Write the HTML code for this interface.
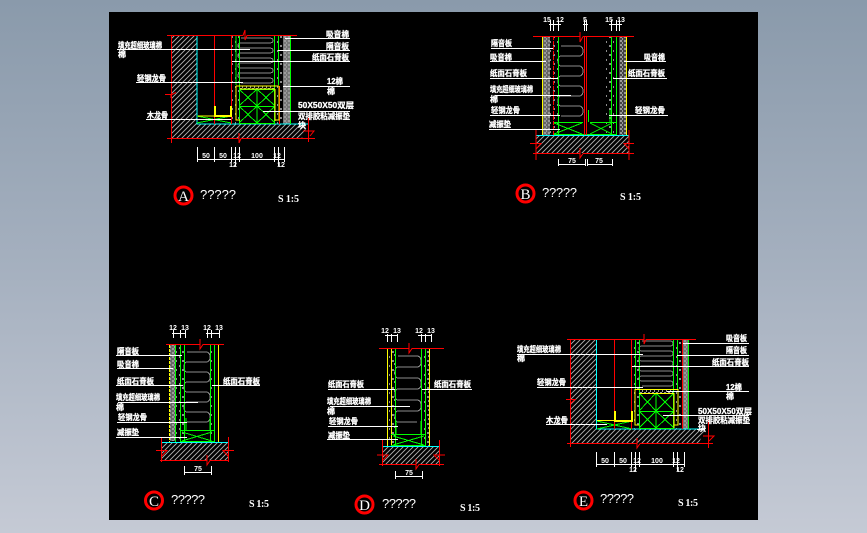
<!DOCTYPE html>
<html><head><meta charset="utf-8"><style>
html,body{margin:0;padding:0;width:867px;height:533px;overflow:hidden;background:linear-gradient(180deg,#8a9aab 0,#a5b0bf 50%,#c5cad5 100%)}
svg{position:absolute;left:0;top:0}
.k{fill:none;shape-rendering:crispEdges;stroke-width:1}
.r{stroke:#f00}.g{stroke:#0f0}.c{stroke:#0ff}.y{stroke:#ff0}.w{stroke:#fff}
.v{fill:none;stroke:#8c8c8c;stroke-width:1;shape-rendering:crispEdges}
.t{font:bold 8px "Liberation Sans","Noto Sans CJK SC",sans-serif;fill:#fff;stroke:#fff;stroke-width:.3}
.n{font:bold 7px "Liberation Sans",sans-serif;fill:#fff;text-anchor:middle}
.q{font:13px "Liberation Sans",sans-serif;fill:#fff}
.s{font:bold 10px "Liberation Serif",serif;fill:#fff}
.l{font:15px "Liberation Serif",serif;fill:#fff;text-anchor:middle}
.o{fill:#000;stroke:#f00;stroke-width:3}
</style></head><body>
<svg width="867" height="533" viewBox="0 0 867 533" xmlns="http://www.w3.org/2000/svg">
<defs>
<pattern id="h" width="5" height="5" patternUnits="userSpaceOnUse"><path d="M0 5L5 0M-1 1L1 -1M4 6L6 4" stroke="#9a9a9a" stroke-width="1" shape-rendering="crispEdges"/></pattern>
<pattern id="d" width="4" height="4" patternUnits="userSpaceOnUse"><rect width="2" height="2" fill="#9a9a9a"/><rect x="2" y="2" width="1" height="2" fill="#9a9a9a"/></pattern>
<pattern id="e" width="7" height="9" patternUnits="userSpaceOnUse"><rect width="2" height="2" fill="#8c8c8c"/><rect x="4" y="5" width="1" height="2" fill="#8c8c8c"/></pattern>
</defs>
<rect x="109" y="12" width="649" height="508" fill="#000"/>

<!-- A -->
<path d="M171 35H197V124H308L302 138H171Z" fill="url(#h)"/>
<rect x="283" y="36" width="7" height="88" fill="#777"/><rect x="283" y="36" width="7" height="88" fill="url(#d)"/>
<rect x="232" y="36" width="8" height="88" fill="url(#e)"/><rect x="274" y="36" width="9" height="88" fill="url(#e)"/>
<rect x="240" y="86" width="34" height="3" fill="url(#d)"/>
<path class="v" d="M241 38h28q4 0 4 2.500t-4 2.500h-28q-3 0-3 2.500t3 2.500h28q4 0 4 2.500t-4 2.500h-28q-3 0-3 2.500t3 2.500h28q4 0 4 2.500t-4 2.500h-28q-3 0-3 2.500t3 2.500h28q4 0 4 2.500t-4 2.500h-28q-3 0-3 2.500t3 2.500h28q4 0 4 2.500t-4 2.500h-28"/>
<path class="k c" d="M197 36V124H308"/>
<path class="k g" d="M236 36V85M239.500 36V123M274.500 36V123M278.500 36V85M290.500 36V124M239 89.500H275M239 123.500H275M239 106.500H275M257 89V123M239 89L257 106L275 89M239 106L257 123L275 106M239 106L257 89L275 106M239 123L257 106L275 123M197 116L231 123M197 123L231 116"/>
<path class="k r" d="M167 35.500H240M248 35.500H297M167 138.500H237M243 138.500H315M171.500 35V143M214.500 35V124M231.500 36V124M279.500 86V124M308.500 117V142"/>
<path class="k y" d="M236 86H279M236 86V120H240M279 86V120H275M240 89H275M275 89V121M198 116H231"/>
<path d="M215 106V116H231V106" fill="none" stroke="#ff0" stroke-width="2"/>
<path d="M240 35.500H243L245 30L245 40L247 35.500H250M165 94.500H172L176 92.500M171 94.500V98M303 131H314L310 136M237 138.500H239L239 133V143L241 138.500H243" fill="none" stroke="#f00"/>
<path class="k w" d="M117 49.500H250M136 82.500H243M146 119.500H231M285 38.500H350M278 50.500H350M232 61.500H350M283 86.500H350M263 111.500H350"/>
<text class="t" x="118" y="48" textLength="44" lengthAdjust="spacingAndGlyphs">填充超细玻璃棉</text><text class="t" x="118" y="57">棉</text>
<text class="t" x="137" y="81" textLength="29" lengthAdjust="spacingAndGlyphs">轻钢龙骨</text><text class="t" x="147" y="118" textLength="21" lengthAdjust="spacingAndGlyphs">木龙骨</text>
<text class="t" x="326" y="37" textLength="23" lengthAdjust="spacingAndGlyphs">吸音棉</text><text class="t" x="326" y="49" textLength="23" lengthAdjust="spacingAndGlyphs">隔音板</text>
<text class="t" x="312" y="60" textLength="37" lengthAdjust="spacingAndGlyphs">纸面石膏板</text><text class="t" x="327" y="84" textLength="16" lengthAdjust="spacingAndGlyphs">12棉</text><text class="t" x="327" y="94">棉</text>
<text class="t" x="298" y="108" textLength="56" lengthAdjust="spacingAndGlyphs">50X50X50双层</text><text class="t" x="298" y="119" textLength="52" lengthAdjust="spacingAndGlyphs">双排胶粘减振垫</text><text class="t" x="298" y="128">块</text>
<path class="k w" d="M197.500 147V162M214.500 147V162M231.500 147V162M235.500 147V166M239.500 147V162M274.500 147V162M278.500 147V166M284.500 147V162M197 159.500H285"/>
<text class="n" x="206" y="158">50</text><text class="n" x="223" y="158">50</text><text class="n" x="237" y="158">12</text><text class="n" x="257" y="158">100</text><text class="n" x="277" y="158">12</text><text class="n" x="233" y="167">12</text><text class="n" x="281" y="167">12</text>
<circle class="o" cx="183.500" cy="195.500" r="8.500"/><text class="l" x="183.500" y="201">A</text>
<text class="q" x="200" y="199" textLength="36">?????</text><text class="s" x="278" y="202" textLength="21">S 1:5</text>

<!-- B -->
<rect x="536" y="136" width="93" height="17" fill="url(#h)"/>
<rect x="543" y="36" width="7" height="99" fill="#666"/><rect x="543" y="36" width="7" height="99" fill="url(#d)"/>
<rect x="619" y="36" width="7" height="99" fill="#444"/><rect x="619" y="36" width="7" height="99" fill="url(#d)"/>
<rect x="550" y="36" width="8" height="99" fill="url(#e)"/><rect x="604" y="36" width="12" height="99" fill="url(#e)"/>
<path class="v" d="M561 46h18q4 0 4 5t-4 5h-18q-3 0-3 5t3 5h18q4 0 4 5t-4 5h-18q-3 0-3 5t3 5h18q4 0 4 5t-4 5h-18q-3 0-3 5t3 5h18q4 0 4 5t-4 5h-18"/>
<path class="k y" d="M542.500 36V135M626.500 36V135"/>
<path class="k g" d="M558.500 36V135M611.500 36V135M616.500 36V135M554 134.500H616M554 123L582 134M554 134L582 123M590 123L612 134M590 134L612 123"/>
<path d="M554 122.500H583M590 122.500H616M588.500 110V122M610 110V122" stroke="#0f0" stroke-width="2" class="k"/>
<path class="k c" d="M536 135.500H629"/>
<path class="k r" d="M533 36.500H578M583 36.500H634M533 153.500H578M583 153.500H634M536 130V160M629 130V160M584.500 36V135M586.500 36V135"/>
<path class="k r" stroke-dasharray="4 1" d="M553.500 36V135"/>
<path d="M578 36.500H580L580 32V42L583 36.500M578 153.500H580L580 148V158L583 153.500M530 143.500H541L536 149M634 143.500H624L629 149" fill="none" stroke="#f00"/>
<path class="k w" d="M491 48.500H553M490 61.500H546M490 78.500H558M495 95.500H571M490 115.500H560M489 129.500H560M624 61.500H666M613 78.500H667M609 115.500H668"/>
<text class="t" x="491" y="46" textLength="21" lengthAdjust="spacingAndGlyphs">隔音板</text><text class="t" x="490" y="60" textLength="22" lengthAdjust="spacingAndGlyphs">吸音棉</text>
<text class="t" x="490" y="76" textLength="37" lengthAdjust="spacingAndGlyphs">纸面石膏板</text><text class="t" x="490" y="92" textLength="43" lengthAdjust="spacingAndGlyphs">填充超细玻璃棉</text><text class="t" x="490" y="102">棉</text>
<text class="t" x="491" y="113" textLength="29" lengthAdjust="spacingAndGlyphs">轻钢龙骨</text><text class="t" x="489" y="127" textLength="22" lengthAdjust="spacingAndGlyphs">减振垫</text>
<text class="t" x="644" y="60" textLength="21" lengthAdjust="spacingAndGlyphs">吸音棉</text><text class="t" x="628" y="76" textLength="37" lengthAdjust="spacingAndGlyphs">纸面石膏板</text><text class="t" x="635" y="113" textLength="30" lengthAdjust="spacingAndGlyphs">轻钢龙骨</text>
<path class="k w" d="M549 24.500H561M550.500 20V31M553.500 20V31M558.500 20V31M583 24.500H588M584.500 20V31M586.500 20V31M609 24.500H622M611.500 20V31M616.500 20V31M619.500 20V31M558 164.500H585M587 164.500H612M558.500 159V166M585.500 159V166M587.500 159V166M612.500 159V166"/>
<text class="n" x="547" y="22">15</text><text class="n" x="560" y="22">12</text><text class="n" x="585" y="22">5</text><text class="n" x="609" y="22">15</text><text class="n" x="621" y="22">13</text>
<text class="n" x="572" y="163">75</text><text class="n" x="599" y="163">75</text>
<circle class="o" cx="525.500" cy="193.500" r="8.500"/><text class="l" x="525.500" y="199">B</text>
<text class="q" x="542" y="197" textLength="35">?????</text><text class="s" x="620" y="200" textLength="21">S 1:5</text>

<!-- C -->
<rect x="162" y="443" width="66" height="17" fill="url(#h)"/>
<rect x="170" y="345" width="6" height="96" fill="#666"/><rect x="170" y="345" width="6" height="96" fill="url(#d)"/>
<rect x="176" y="345" width="8" height="96" fill="url(#e)"/><rect x="210" y="345" width="4" height="96" fill="url(#e)"/>
<path class="v" d="M187 352h19q4 0 4 5t-4 5h-19q-3 0-3 5t3 5h19q4 0 4 5t-4 5h-19q-3 0-3 5t3 5h19q4 0 4 5t-4 5h-19q-3 0-3 5t3 5h19q4 0 4 5t-4 5h-19"/>
<path class="k y" d="M218.500 345V442"/><path class="k y" stroke-dasharray="3 1" d="M169.500 345V442"/>
<path class="k g" d="M175.500 345V442M180.500 345V442M184.500 345V442M210.500 345V442M214.500 345V442M181 441.500H214M182 432L212 441M182 441L212 432"/>
<path class="k" stroke="#0f0" stroke-width="2" d="M180 430.500H214M186 418V430M210 418V430"/>
<path class="k c" d="M162 442.500H228"/>
<path class="k r" d="M166 344.500H199M204 344.500H224M160 460.500H206M211 460.500H229M161.500 437V462M228.500 437V462"/>
<path d="M199 344.500H200L200 339V349L203 344.500H204M206 460.500H207L207 455V465L210 460.500H211M156 450.500H167L162 456M234 450.500H223L228 456" fill="none" stroke="#f00"/>
<path class="k w" d="M116 355.500H182M117 368.500H173M116 385.500H183M212 385.500H260M118 402.500H198M117 422.500H187M116 437.500H187"/>
<text class="t" x="117" y="354" textLength="22" lengthAdjust="spacingAndGlyphs">隔音板</text><text class="t" x="117" y="367" textLength="22" lengthAdjust="spacingAndGlyphs">吸音棉</text>
<text class="t" x="117" y="384" textLength="37" lengthAdjust="spacingAndGlyphs">纸面石膏板</text><text class="t" x="223" y="384" textLength="37" lengthAdjust="spacingAndGlyphs">纸面石膏板</text>
<text class="t" x="116" y="400" textLength="44" lengthAdjust="spacingAndGlyphs">填充超细玻璃棉</text><text class="t" x="116" y="410">棉</text>
<text class="t" x="118" y="420" textLength="29" lengthAdjust="spacingAndGlyphs">轻钢龙骨</text><text class="t" x="117" y="435" textLength="22" lengthAdjust="spacingAndGlyphs">减振垫</text>
<path class="k w" d="M172 333.500H186M173.500 330V338M180.500 330V338M185.500 330V338M206 333.500H220M207.500 330V338M211.500 330V338M219.500 330V338M184 472.500H211M184.500 466V475M211.500 466V475"/>
<text class="n" x="173" y="330">12</text><text class="n" x="185" y="330">13</text><text class="n" x="207" y="330">12</text><text class="n" x="219" y="330">13</text>
<text class="n" x="198" y="471">75</text>
<circle class="o" cx="154" cy="500.500" r="8.500"/><text class="l" x="154" y="506">C</text>
<text class="q" x="171" y="504" textLength="34">?????</text><text class="s" x="249" y="507" textLength="20">S 1:5</text>

<!-- D -->
<rect x="382" y="447" width="57" height="17" fill="url(#h)"/>
<rect x="388" y="349" width="7" height="96" fill="url(#e)"/><rect x="422" y="349" width="8" height="96" fill="url(#e)"/>
<rect x="388" y="349" width="7" height="96" fill="url(#e)" transform="translate(2 3)"/><rect x="422" y="349" width="6" height="96" fill="url(#e)" transform="translate(1 4)"/>
<path class="v" d="M398 356h19q4 0 4 5.500t-4 5.500h-19q-3 0-3 5.500t3 5.500h19q4 0 4 5.500t-4 5.500h-19q-3 0-3 5.500t3 5.500h19q4 0 4 5.500t-4 5.500h-19q-3 0-3 5.500t3 5.500h19"/>
<path class="k y" d="M387.500 349V446M391.500 349V446M429.500 349V446"/>
<path class="k g" d="M395.500 349V445M421.500 349V445M425.500 349V445M391 445.500H426M393 436L424 445M393 445L424 436"/>
<path class="k" stroke="#0f0" stroke-width="2" d="M391 434.500H426M396 421V434M421 421V434"/>
<path class="k c" d="M382 446.500H439"/>
<path class="k r" d="M379 348.500H408M413 348.500H444M379 464.500H415M420 464.500H444M382.500 440V466M439.500 440V466"/>
<path d="M408 348.500H409L409 343V353L412 348.500H413M415 464.500H416L416 459V469L419 464.500H420M377 455H388L383 460M445 455H434L439 460" fill="none" stroke="#f00"/>
<path class="k w" d="M328 389.500H395M422 389.500H472M330 406.500H410M328 426.500H398M327 439.500H398"/>
<text class="t" x="328" y="387" textLength="36" lengthAdjust="spacingAndGlyphs">纸面石膏板</text><text class="t" x="434" y="387" textLength="37" lengthAdjust="spacingAndGlyphs">纸面石膏板</text>
<text class="t" x="327" y="404" textLength="44" lengthAdjust="spacingAndGlyphs">填充超细玻璃棉</text><text class="t" x="327" y="414">棉</text>
<text class="t" x="329" y="424" textLength="29" lengthAdjust="spacingAndGlyphs">轻钢龙骨</text><text class="t" x="328" y="438" textLength="22" lengthAdjust="spacingAndGlyphs">减振垫</text>
<path class="k w" d="M385 335.500H398M387.500 334V342M391.500 334V342M397.500 334V342M418 335.500H432M421.500 334V342M425.500 334V342M431.500 334V342M395 476.500H422M395.500 471V479M422.500 471V479"/>
<text class="n" x="385" y="333">12</text><text class="n" x="397" y="333">13</text><text class="n" x="419" y="333">12</text><text class="n" x="431" y="333">13</text>
<text class="n" x="409" y="475">75</text>
<circle class="o" cx="364.500" cy="504.500" r="8.500"/><text class="l" x="364.500" y="510">D</text>
<text class="q" x="382" y="508" textLength="34">?????</text><text class="s" x="460" y="511" textLength="20">S 1:5</text>

<!-- E -->
<path d="M571 340H596V429H705L699 443H571Z" fill="url(#h)"/>
<rect x="683" y="340" width="5" height="89" fill="#777"/><rect x="683" y="340" width="5" height="89" fill="url(#d)"/>
<rect x="631" y="340" width="9" height="89" fill="url(#e)"/><rect x="673" y="340" width="9" height="89" fill="url(#e)"/>
<rect x="640" y="390" width="34" height="3" fill="url(#d)"/>
<path class="v" d="M642 341h28q3 0 3 2.500t-3 2.500h-28q-3 0-3 2.500t3 2.500h28q3 0 3 2.500t-3 2.500h-28q-3 0-3 2.500t3 2.500h28q3 0 3 2.500t-3 2.500h-28q-3 0-3 2.500t3 2.500h28q3 0 3 2.500t-3 2.500h-28q-3 0-3 2.500t3 2.500h28q3 0 3 2.500t-3 2.500h-28"/>
<path class="k c" d="M596.500 340V429H705"/>
<path class="k g" d="M635.500 340V389M639.500 340V429M673.500 340V429M677.500 340V389M688.500 340V429M639 393.500H674M639 428.500H674M639 411.500H674M656 393V428M639 393L656 411L674 393M639 411L656 428L674 411M639 411L656 393L674 411M639 428L656 411L674 428M597 421L632 429M597 429L632 421"/>
<path class="k r" d="M567 339.500H642M646 339.500H696M567 443.500H636M640 443.500H713M570.500 339V447M614.500 340V429M631.500 340V429M682.500 340V429M708.500 420V448"/>
<path class="k y" d="M635 389.500H678M635 389V425H639M678 389V425H674M639 393.500H674M674 393V428M597 420.500H632"/>
<path d="M615 411V421H632V411" fill="none" stroke="#ff0" stroke-width="2"/>
<path d="M642 339.500H644L644 334V344L646 339.500M636 443.500H637L637 438V448L640 443.500M566 399.500H575L570 404M703 436H714L709 441" fill="none" stroke="#f00"/>
<path class="k w" d="M517 354.500H643M537 387.500H643M546 424.500H607M683 343.500H749M677 355.500H749M632 366.500H749M667 391.500H749M663 415.500H749M697 429.500H705"/>
<text class="t" x="517" y="352" textLength="44" lengthAdjust="spacingAndGlyphs">填充超细玻璃棉</text><text class="t" x="517" y="361">棉</text>
<text class="t" x="537" y="385" textLength="29" lengthAdjust="spacingAndGlyphs">轻钢龙骨</text><text class="t" x="546" y="423" textLength="22" lengthAdjust="spacingAndGlyphs">木龙骨</text>
<text class="t" x="726" y="341" textLength="21" lengthAdjust="spacingAndGlyphs">吸音板</text><text class="t" x="726" y="353" textLength="21" lengthAdjust="spacingAndGlyphs">隔音板</text>
<text class="t" x="712" y="365" textLength="37" lengthAdjust="spacingAndGlyphs">纸面石膏板</text><text class="t" x="726" y="390" textLength="16" lengthAdjust="spacingAndGlyphs">12棉</text><text class="t" x="726" y="399">棉</text>
<text class="t" x="698" y="414" textLength="54" lengthAdjust="spacingAndGlyphs">50X50X50双层</text><text class="t" x="698" y="423" textLength="52" lengthAdjust="spacingAndGlyphs">双排胶粘减振垫</text><text class="t" x="698" y="431">块</text>
<path class="k w" d="M596.500 452V467M614.500 452V467M631.500 452V467M635.500 452V471M639.500 452V467M673.500 452V467M677.500 452V471M684.500 452V467M596 464.500H685"/>
<text class="n" x="605" y="463">50</text><text class="n" x="623" y="463">50</text><text class="n" x="637" y="463">12</text><text class="n" x="657" y="463">100</text><text class="n" x="676" y="463">12</text><text class="n" x="633" y="472">12</text><text class="n" x="680" y="472">12</text>
<circle class="o" cx="583.500" cy="500.500" r="8.500"/><text class="l" x="583.500" y="506">E</text>
<text class="q" x="600" y="503" textLength="34">?????</text><text class="s" x="678" y="506" textLength="20">S 1:5</text>
</svg>
</body></html>
